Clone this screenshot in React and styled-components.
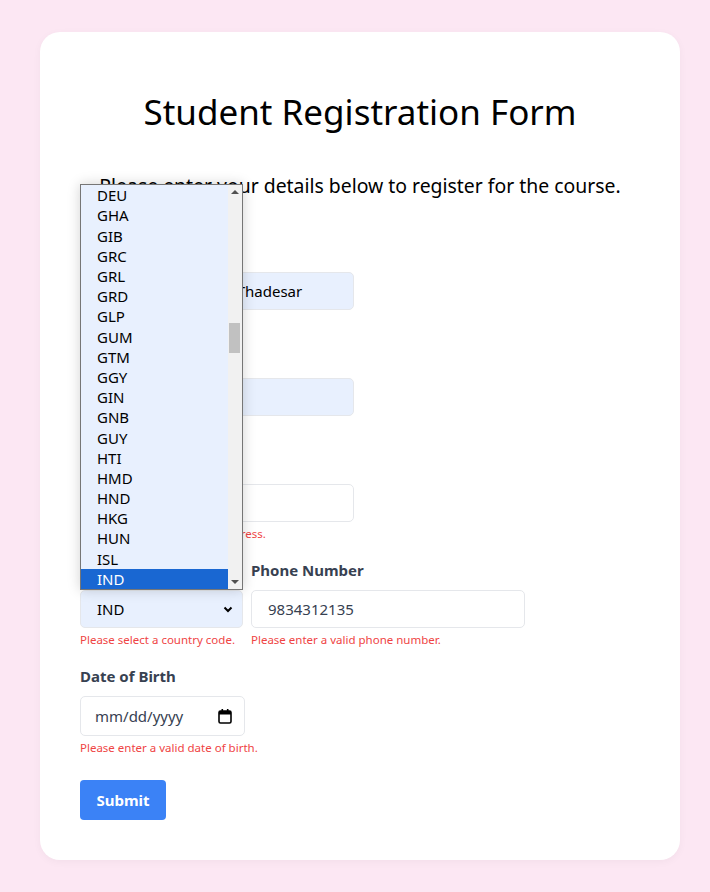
import React from "react";
import styled, { createGlobalStyle } from "styled-components";

const GlobalStyle = createGlobalStyle`
  body {
    margin: 0;
    background: #fce7f3;
    font-family: "Noto Sans", "Open Sans", sans-serif;
  }
`;

const Page = styled.div`
  padding: 32px 30px 32px 40px;
`;

const Card = styled.form`
  width: 640px;
  box-sizing: border-box;
  background: #fff;
  border-radius: 20px;
  padding: 40px;
  box-shadow: 0 2px 8px rgba(0, 0, 0, 0.04);
`;

const Title = styled.h1`
  margin: 18px 0 38px;
  font-size: 35px;
  font-weight: 400;
  line-height: 44px;
  text-align: center;
  color: #000;
`;

const Subtitle = styled.p`
  margin: 0 0 40px;
  font-size: 19.4px;
  line-height: 28px;
  text-align: center;
  color: #000;
`;

const Group = styled.div`
  margin-bottom: 16px;
`;

const Row = styled.div`
  display: flex;
  gap: 8px;
  margin-bottom: 16px;
`;

const Field = styled.div`
  position: relative;
  display: flex;
  flex-direction: column;
`;

const Label = styled.label`
  display: block;
  font-size: 15px;
  font-weight: 700;
  line-height: 24px;
  margin-bottom: 8px;
  color: #374151;
`;

const Input = styled.input`
  box-sizing: border-box;
  width: ${(p) => p.$width || 274}px;
  height: ${(p) => p.$height || 38}px;
  padding: 0 16px;
  border: 1px solid #e5e7eb;
  border-radius: 5px;
  background: ${(p) => (p.$filled ? "#e8f0fe" : "#fff")};
  font-family: inherit;
  font-size: 15px;
  color: ${(p) => (p.$filled ? "#000" : "#374151")};
  outline: none;
`;

const SelectBox = styled.div`
  box-sizing: border-box;
  width: 163px;
  height: 38px;
  padding: 0 8px 0 16px;
  border: 1px solid #e5e7eb;
  border-radius: 5px;
  background: #e8f0fe;
  display: flex;
  align-items: center;
  justify-content: space-between;
  font-size: 15px;
  color: #000;
`;

const DateBox = styled.div`
  box-sizing: border-box;
  width: 165px;
  height: 40px;
  padding: 0 12px 0 14px;
  border: 1px solid #e5e7eb;
  border-radius: 5px;
  background: #fff;
  display: flex;
  align-items: center;
  justify-content: space-between;
  font-size: 15px;
  color: #374151;
`;

const Error = styled.div`
  margin-top: 4px;
  min-height: 16px;
  font-size: 11.5px;
  line-height: 16px;
  color: #ef4444;
`;

const Submit = styled.button`
  margin-top: 8px;
  width: 86px;
  height: 40px;
  border: none;
  border-radius: 4px;
  background: #3b82f6;
  color: #fff;
  font-family: inherit;
  font-size: 15px;
  font-weight: 700;
`;

const Popup = styled.div`
  position: absolute;
  left: 0;
  bottom: 38px;
  width: 163px;
  height: 406px;
  box-sizing: border-box;
  border: 1px solid #767676;
  background: #e8f0fe;
  display: flex;
  box-shadow: 0 0 12px rgba(0, 0, 0, 0.18);
  z-index: 5;
`;

const Options = styled.div`
  flex: 1;
  overflow: hidden;
  display: flex;
  flex-direction: column;
  justify-content: flex-end;
`;

const Option = styled.div`
  flex: none;
  height: 20.2px;
  line-height: 20px;
  padding-left: 16px;
  font-size: 15px;
  color: ${(p) => (p.$active ? "#fff" : "#000")};
  background: ${(p) => (p.$active ? "#1967d2" : "transparent")};
`;

const Scrollbar = styled.div`
  position: relative;
  width: 14px;
  background: #f1f1f1;
  display: flex;
  flex-direction: column;
  justify-content: space-between;
  align-items: center;
  padding: 5px 0;
  box-sizing: border-box;
`;

const Thumb = styled.div`
  position: absolute;
  left: 1px;
  top: 138px;
  width: 11px;
  height: 30px;
  background: #c1c1c1;
`;

const Arrow = styled.div`
  width: 0;
  height: 0;
  border-left: 4px solid transparent;
  border-right: 4px solid transparent;
  ${(p) =>
    p.$up ? "border-bottom: 4px solid #505050;" : "border-top: 4px solid #505050;"}
`;

const codes = [
  "DEU", "GHA", "GIB", "GRC", "GRL", "GRD", "GLP", "GUM", "GTM", "GGY",
  "GIN", "GNB", "GUY", "HTI", "HMD", "HND", "HKG", "HUN", "ISL", "IND",
];

const Chevron = () => (
  <svg width="12" height="12" viewBox="0 0 12 12">
    <path d="M2.5 4.5 6 8l3.5-3.5" fill="none" stroke="#000" strokeWidth="2" />
  </svg>
);

const CalendarIcon = () => (
  <svg width="14" height="15" viewBox="0 0 14 15">
    <rect x="1" y="2" width="12" height="12" rx="1.5" fill="none" stroke="#000" strokeWidth="1.6" />
    <rect x="1" y="2" width="12" height="3.5" fill="#000" />
    <rect x="3.5" y="0" width="1.6" height="3" fill="#000" />
    <rect x="8.9" y="0" width="1.6" height="3" fill="#000" />
  </svg>
);

export default function App() {
  return (
    <Page>
      <GlobalStyle />
      <Card onSubmit={(e) => e.preventDefault()}>
        <Title>Student Registration Form</Title>
        <Subtitle>Please enter your details below to register for the course.</Subtitle>

        <Group>
          <Label>First Name</Label>
          <Input $filled defaultValue="Rushabhkumar Jayi Thadesar" />
          <Error />
        </Group>

        <Group>
          <Label>Last Name</Label>
          <Input $filled defaultValue="" />
          <Error>Please enter your last name.</Error>
        </Group>

        <Group>
          <Label>Email</Label>
          <Input defaultValue="" />
          <Error>Please enter a valid email address.</Error>
        </Group>

        <Row>
          <Field>
            <Label>Country Code</Label>
            <div style={{ position: "relative" }}>
              <SelectBox>
                IND
                <Chevron />
              </SelectBox>
              <Popup>
                <Options>
                  {codes.map((c) => (
                    <Option key={c} $active={c === "IND"}>
                      {c}
                    </Option>
                  ))}
                </Options>
                <Scrollbar>
                  <Arrow $up />
                  <Thumb />
                  <Arrow />
                </Scrollbar>
              </Popup>
            </div>
            <Error>Please select a country code.</Error>
          </Field>
          <Field>
            <Label>Phone Number</Label>
            <Input defaultValue="9834312135" />
            <Error>Please enter a valid phone number.</Error>
          </Field>
        </Row>

        <Group>
          <Label>Date of Birth</Label>
          <DateBox>
            mm/dd/yyyy
            <CalendarIcon />
          </DateBox>
          <Error>Please enter a valid date of birth.</Error>
        </Group>

        <Submit type="submit">Submit</Submit>
      </Card>
    </Page>
  );
}
